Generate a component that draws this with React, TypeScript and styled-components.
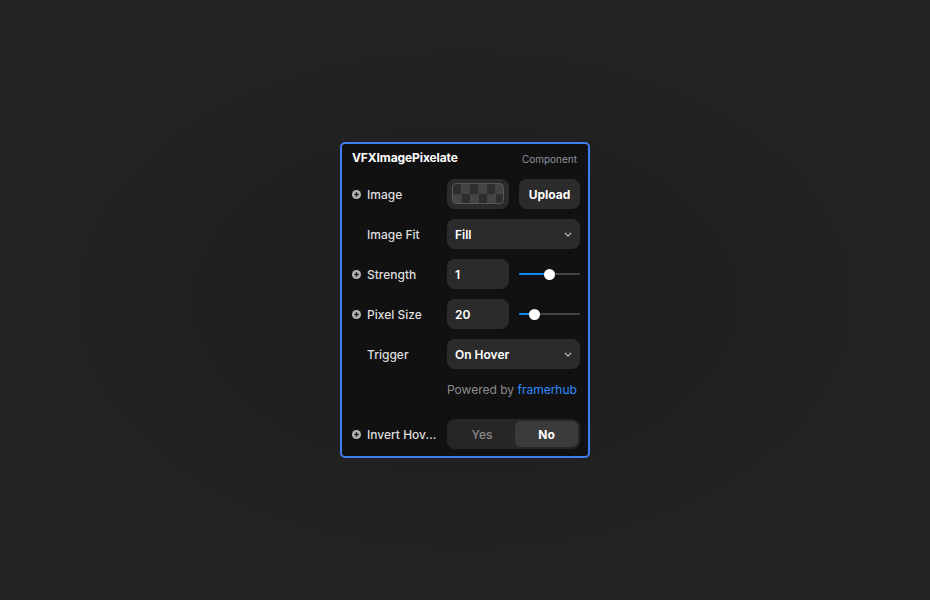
import React from "react";
import styled, { createGlobalStyle } from "styled-components";

const GlobalStyle = createGlobalStyle`
  html, body {
    margin: 0;
    padding: 0;
    background: #222222;
  }
  body {
    font-family: Inter, "Noto Sans", Arial, sans-serif;
    -webkit-font-smoothing: antialiased;
  }
`;

const Stage = styled.div`
  width: 100vw;
  height: 100vh;
  display: flex;
  align-items: center;
  justify-content: center;
  background: radial-gradient(
    ellipse farthest-corner at 50% 50%,
    #1f1f1f 0 35%,
    #202020 35% 42%,
    #212121 42% 53%,
    #222222 53% 59%,
    #232323 59%
  );
`;

const Panel = styled.div`
  width: 250px;
  height: 316px;
  box-sizing: border-box;
  background: #111111;
  border: 2px solid #3f7cf0;
  border-radius: 5px;
  padding: 0 8px 0 10px;
  display: flex;
  flex-direction: column;
  gap: 10px;
`;

const Header = styled.div`
  height: 27px;
  display: flex;
  align-items: center;
  justify-content: space-between;
  padding-right: 3px;
  margin-bottom: -2px;
`;

const Title = styled.span`
  font-size: 12px;
  font-weight: 700;
  color: #ffffff;
  letter-spacing: -0.1px;
`;

const Kind = styled.span`
  font-size: 10px;
  color: #8d949e;
  margin-top: 2px;
`;

const Row = styled.div`
  display: grid;
  grid-template-columns: 95px 1fr;
  align-items: center;
  height: 30px;
`;

const Label = styled.div<{ $indent?: boolean }>`
  display: flex;
  align-items: center;
  gap: 6px;
  padding-left: ${(p) => (p.$indent ? "15px" : "0")};
  font-size: 12px;
  font-weight: 500;
  color: #dedede;
  white-space: nowrap;
  overflow: hidden;
`;

const Pair = styled.div`
  display: flex;
  gap: 10px;
  height: 100%;
`;

const Field = styled.div<{ $grow?: boolean }>`
  flex: ${(p) => (p.$grow ? "1" : "0 0 62px")};
  height: 100%;
  box-sizing: border-box;
  background: #2b2b2b;
  border-radius: 8px;
  display: flex;
  align-items: center;
  justify-content: space-between;
  padding: 0 8px;
  font-size: 12px;
  font-weight: 600;
  color: #ffffff;
`;

const Thumb = styled.div`
  flex: 0 0 62px;
  height: 100%;
  box-sizing: border-box;
  background: #2b2b2b;
  border-radius: 8px;
  padding: 4px 5px 5px;
  display: flex;
`;

const Checker = styled.div`
  flex: 1;
  border: 1px solid #575757;
  border-radius: 4px;
  background: repeating-conic-gradient(#444444 0 25%, #2e2e2e 0 50%) 0 0 / 17px 20px;
`;

const Button = styled.button`
  flex: 1;
  height: 100%;
  border: none;
  background: #2b2b2b;
  border-radius: 8px;
  font-family: inherit;
  font-size: 12px;
  font-weight: 700;
  color: #ffffff;
  padding: 0;
`;

const Track = styled.div`
  flex: 1;
  position: relative;
  display: flex;
  align-items: center;
`;

const Rail = styled.div`
  width: 100%;
  height: 2px;
  background: #444444;
  border-radius: 1px;
`;

const Fill = styled.div`
  position: absolute;
  left: 0;
  height: 2px;
  background: #0a8cff;
  border-radius: 1px;
`;

const Knob = styled.div`
  position: absolute;
  width: 11px;
  height: 11px;
  margin-left: -5.5px;
  border-radius: 50%;
  background: #ffffff;
`;

const Credit = styled.div`
  height: 20px;
  margin-bottom: 10px;
  padding-left: 95px;
  display: flex;
  align-items: center;
  font-size: 12px;
  color: #8c8c8c;
  white-space: nowrap;
`;

const Brand = styled.span`
  color: #2f8cff;
`;

const Segmented = styled.div`
  height: 100%;
  box-sizing: border-box;
  background: #262626;
  border-radius: 8px;
  padding: 2px;
  display: grid;
  grid-template-columns: 66px 1fr;
`;

const Segment = styled.div<{ $active?: boolean }>`
  display: flex;
  align-items: center;
  justify-content: center;
  border-radius: 6px;
  font-size: 12px;
  font-weight: ${(p) => (p.$active ? 700 : 500)};
  color: ${(p) => (p.$active ? "#ffffff" : "#8a8a8a")};
  background: ${(p) => (p.$active ? "#3b3b3b" : "transparent")};
`;

const PlusIcon = () => (
  <svg width="9" height="9" viewBox="0 0 10 10">
    <circle cx="5" cy="5" r="5" fill="#b5b5b5" />
    <path d="M5 2.6v4.8M2.6 5h4.8" stroke="#111" strokeWidth="1.4" />
  </svg>
);

const Chevron = () => (
  <svg width="8" height="5" viewBox="0 0 8 5">
    <path d="M1 1l3 3 3-3" fill="none" stroke="#b0b0b0" strokeWidth="1.3" />
  </svg>
);

const Slider = ({ value }: { value: number }) => (
  <Track>
    <Rail />
    <Fill style={{ width: `${value * 100}%` }} />
    <Knob style={{ left: `${value * 100}%` }} />
  </Track>
);

const clip = (text: string, max = 10) =>
  text.length > max ? `${text.slice(0, max)}...` : text;

const App = () => (
  <Stage>
    <GlobalStyle />
    <Panel>
      <Header>
        <Title>VFXImagePixelate</Title>
        <Kind>Component</Kind>
      </Header>

      <Row>
        <Label>
          <PlusIcon />
          Image
        </Label>
        <Pair>
          <Thumb>
            <Checker />
          </Thumb>
          <Button>Upload</Button>
        </Pair>
      </Row>

      <Row>
        <Label $indent>Image Fit</Label>
        <Field $grow>
          Fill
          <Chevron />
        </Field>
      </Row>

      <Row>
        <Label>
          <PlusIcon />
          Strength
        </Label>
        <Pair>
          <Field>1</Field>
          <Slider value={0.5} />
        </Pair>
      </Row>

      <Row>
        <Label>
          <PlusIcon />
          Pixel Size
        </Label>
        <Pair>
          <Field>20</Field>
          <Slider value={0.25} />
        </Pair>
      </Row>

      <Row>
        <Label $indent>Trigger</Label>
        <Field $grow>
          On Hover
          <Chevron />
        </Field>
      </Row>

      <Credit>
        Powered by&nbsp;<Brand>framerhub</Brand>
      </Credit>

      <Row>
        <Label title="Invert Hover">
          <PlusIcon />
          {clip("Invert Hover")}
        </Label>
        <Segmented>
          <Segment>Yes</Segment>
          <Segment $active>No</Segment>
        </Segmented>
      </Row>
    </Panel>
  </Stage>
);

export default App;
